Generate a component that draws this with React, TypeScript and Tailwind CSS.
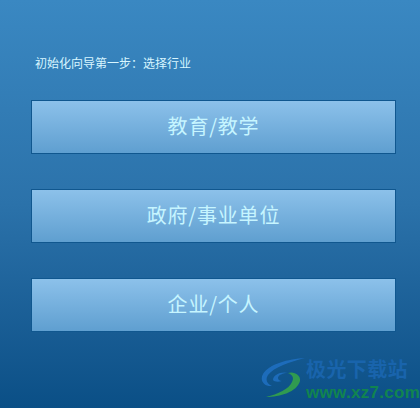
const OPTIONS = ['教育/教学', '政府/事业单位', '企业/个人']

export default function App() {
  return (
    <div className="relative h-[408px] w-[420px] overflow-hidden bg-gradient-to-b from-[#3a88c2] via-[#2b72aa] to-[#0a4f86] font-['Noto_Sans_CJK_SC','Liberation_Sans',sans-serif]">
      <div className="px-[31px] pt-[54px]">
        <p className="pl-[4px] text-[12px] leading-[18px] text-[#d8f6ff]">初始化向导第一步：选择行业</p>
        <div className="mt-[28px] flex flex-col gap-[35px]">
          {OPTIONS.map((o) => (
            <button
              key={o}
              type="button"
              className="flex h-[54px] w-[365px] items-center justify-center border border-[#10578f] bg-gradient-to-b from-[#8cc1ea] to-[#5f9fd0] pb-[3px] text-[20px] font-normal tracking-[0.8px] text-[#c6f5ff]"
            >
              {o}
            </button>
          ))}
        </div>
      </div>
      {/* watermark */}
      <div className="absolute left-[260px] top-[357px] flex items-start opacity-90">
        <svg width="46" height="41" viewBox="0 0 46 41" fill="none">
          <path d="M45 1C28 2 9 7 3 17c-4 7 2 13 9 12-5-2-7-6-4-11C14 10 30 5 45 1z" fill="#1f6fc0" />
          <path d="M13 23c0-5 8-9 15-7-5 0-10 2-10 5 0 2 2 3 4 3-3 1-8 1-9-1z" fill="#1f6fc0" />
          <path d="M6 40c14 0 31-5 34-16 1-6-6-10-12-8 5 2 6 5 4 9-3 7-14 12-26 15z" fill="#34a24a" />
        </svg>
        <div className="flex flex-col">
          <span className="text-[20px] font-bold leading-[24px] tracking-[0.4px] text-[#1a66b0]">极光下载站</span>
          <span className="mt-[3px] font-['Liberation_Sans',sans-serif] text-[17px] font-bold leading-[17px] tracking-[0.3px] text-[#128a4a]">www.xz7.com</span>
        </div>
      </div>
    </div>
  )
}
